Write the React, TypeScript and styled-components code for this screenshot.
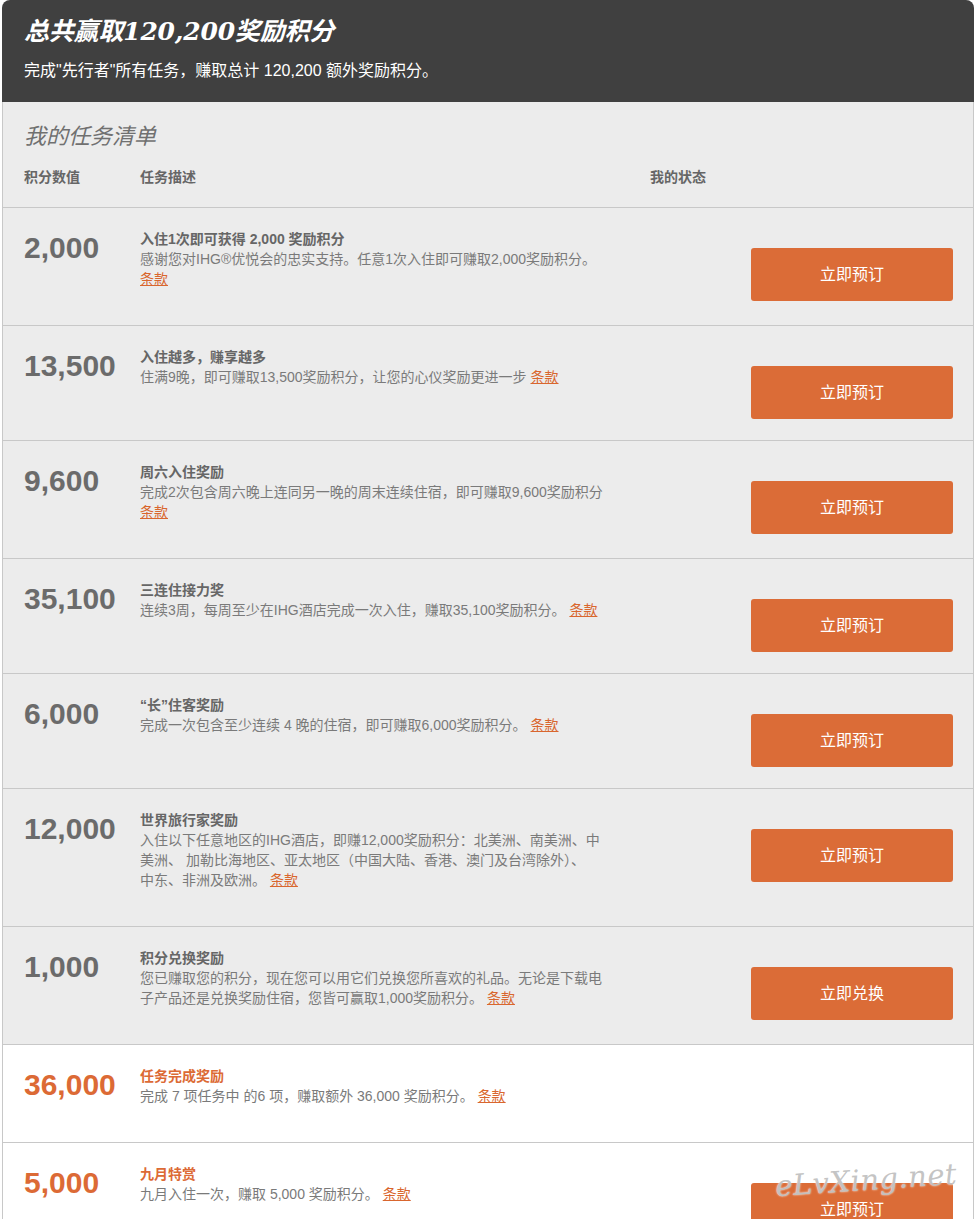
import React from "react";
import styled, { createGlobalStyle } from "styled-components";

const Global = createGlobalStyle`
  html, body { margin: 0; padding: 0; background: #ffffff; }
  body { font-family: "Liberation Sans", "Noto Sans CJK SC", sans-serif; }
`;

const Page = styled.div`
  position: relative;
  width: 972px;
  margin-left: 2px;
  overflow: hidden;
`;

const Hero = styled.header`
  background: #404040;
  border-radius: 8px 8px 0 0;
  padding: 16px 22px 20px;
  color: #ffffff;
`;

const HeroTitle = styled.h1`
  margin: 0;
  font-family: "DejaVu Serif", "Noto Sans CJK SC", serif;
  font-style: italic;
  font-weight: bold;
  font-size: 25px;
  line-height: 32px;
  letter-spacing: -0.2px;
`;

const HeroText = styled.p`
  margin: 12px 0 0;
  font-size: 16px;
  line-height: 22px;
`;

const Board = styled.section`
  border-left: 1px solid #c8c8c8;
  border-right: 1px solid #c8c8c8;
`;

const Intro = styled.div`
  background: #ececec;
  padding: 18px 21px 20px;
  border-bottom: 1px solid #c8c8c8;
`;

const ListTitle = styled.h2`
  margin: 0;
  font-family: "Noto Sans CJK SC", sans-serif;
  font-style: italic;
  font-weight: normal;
  font-size: 22px;
  line-height: 28px;
  color: #707070;
`;

const HeadRow = styled.div`
  display: grid;
  grid-template-columns: 116px 510px 1fr;
  margin-top: 19px;
  font-size: 14px;
  line-height: 20px;
  font-weight: bold;
  color: #666666;
`;

const Row = styled.div<{ $white?: boolean }>`
  display: flex;
  align-items: flex-start;
  background: ${(p) => (p.$white ? "#ffffff" : "#ececec")};
  padding: 21px 20px 21px 21px;
  border-bottom: 1px solid #c8c8c8;
`;

const Points = styled.div<{ $accent?: boolean }>`
  flex: 0 0 116px;
  font-size: 30px;
  line-height: 38px;
  font-weight: bold;
  color: ${(p) => (p.$accent ? "#dc6a35" : "#6b6b6b")};
`;

const Desc = styled.div`
  flex: 0 0 465px;
  padding-bottom: 15px;
  font-size: 14px;
  line-height: 20px;
  color: #7a7a7a;
  white-space: pre-line;
`;

const TaskTitle = styled.div<{ $accent?: boolean }>`
  font-weight: bold;
  color: ${(p) => (p.$accent ? "#dc6a35" : "#666666")};
`;

const Terms = styled.a`
  color: #d9662e;
  text-decoration: underline;
  cursor: pointer;
`;

const BookButton = styled.button`
  margin: 19px 0 0 auto;
  width: 202px;
  height: 53px;
  padding: 0 0 3px;
  border: none;
  border-radius: 3px;
  background: #db6c37;
  color: #ffffff;
  font-family: "Liberation Sans", "Noto Sans CJK SC", sans-serif;
  font-size: 16px;
  cursor: pointer;
`;

const Watermark = styled.div`
  position: absolute;
  left: 773px;
  top: 1163px;
  font-family: "DejaVu Serif", serif;
  font-style: italic;
  font-size: 29px;
  letter-spacing: 0.5px;
  color: rgba(190, 190, 190, 0.92);
  text-shadow: 0 0 2px #ffffff;
  transform: rotate(-4deg);
  pointer-events: none;
`;

type Task = {
  points: string;
  title: string;
  desc: string;
  action?: string;
  accent?: boolean;
};

const tasks: Task[] = [
  {
    points: "2,000",
    title: "入住1次即可获得 2,000 奖励积分",
    desc: "感谢您对IHG®优悦会的忠实支持。任意1次入住即可赚取2,000奖励积分。",
    action: "立即预订",
  },
  {
    points: "13,500",
    title: "入住越多，赚享越多",
    desc: "住满9晚，即可赚取13,500奖励积分，让您的心仪奖励更进一步",
    action: "立即预订",
  },
  {
    points: "9,600",
    title: "周六入住奖励",
    desc: "完成2次包含周六晚上连同另一晚的周末连续住宿，即可赚取9,600奖励积分",
    action: "立即预订",
  },
  {
    points: "35,100",
    title: "三连住接力奖",
    desc: "连续3周，每周至少在IHG酒店完成一次入住，赚取35,100奖励积分。",
    action: "立即预订",
  },
  {
    points: "6,000",
    title: "“长”住客奖励",
    desc: "完成一次包含至少连续 4 晚的住宿，即可赚取6,000奖励积分。",
    action: "立即预订",
  },
  {
    points: "12,000",
    title: "世界旅行家奖励",
    desc: "入住以下任意地区的IHG酒店，即赚12,000奖励积分：北美洲、南美洲、中美洲、 加勒比海地区、亚太地区（中国大陆、香港、澳门及台湾除外）、\n中东、非洲及欧洲。",
    action: "立即预订",
  },
  {
    points: "1,000",
    title: "积分兑换奖励",
    desc: "您已赚取您的积分，现在您可以用它们兑换您所喜欢的礼品。无论是下载电子产品还是兑换奖励住宿，您皆可赢取1,000奖励积分。",
    action: "立即兑换",
  },
  {
    points: "36,000",
    title: "任务完成奖励",
    desc: "完成 7 项任务中 的6 项，赚取额外 36,000 奖励积分。",
    accent: true,
  },
  {
    points: "5,000",
    title: "九月特赏",
    desc: "九月入住一次，赚取 5,000 奖励积分。",
    action: "立即预订",
    accent: true,
  },
];

export default function App() {
  return (
    <Page>
      <Global />
      <Hero>
        <HeroTitle>总共赢取120,200奖励积分</HeroTitle>
        <HeroText>完成"先行者"所有任务，赚取总计 120,200 额外奖励积分。</HeroText>
      </Hero>
      <Board>
        <Intro>
          <ListTitle>我的任务清单</ListTitle>
          <HeadRow>
            <span>积分数值</span>
            <span>任务描述</span>
            <span>我的状态</span>
          </HeadRow>
        </Intro>
        {tasks.map((t) => (
          <Row key={t.points} $white={t.accent}>
            <Points $accent={t.accent}>{t.points}</Points>
            <Desc>
              <TaskTitle $accent={t.accent}>{t.title}</TaskTitle>
              <div>
                {t.desc} <Terms>条款</Terms>
              </div>
            </Desc>
            {t.action && <BookButton>{t.action}</BookButton>}
          </Row>
        ))}
      </Board>
      <Watermark>eLvXing.net</Watermark>
    </Page>
  );
}
